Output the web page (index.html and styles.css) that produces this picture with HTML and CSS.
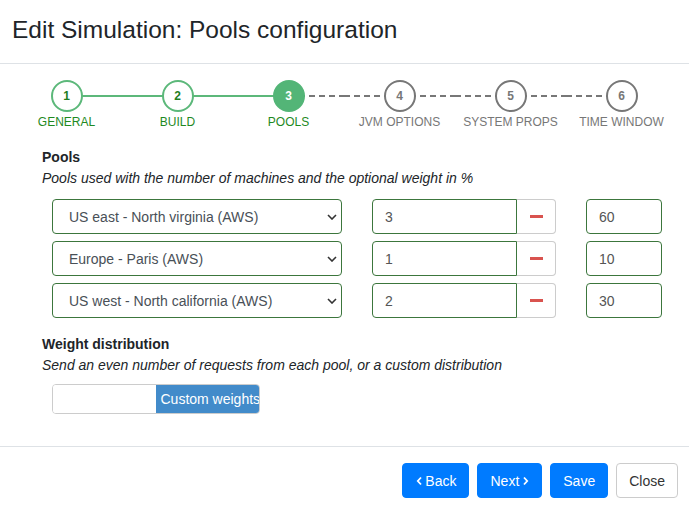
FILE: index.html
```html
<!DOCTYPE html>
<html>
<head>
<meta charset="utf-8">
<link rel="stylesheet" href="styles.css">
</head>
<body>
<div class="modal">
  <div class="modal-header">
    <h4 class="modal-title">Edit Simulation: Pools configuration</h4>
  </div>
  <div class="modal-body">
    <ol class="stepper">
      <li class="step done line-right"><span class="circle">1</span><span class="label">GENERAL</span></li>
      <li class="step done line-left line-right"><span class="circle">2</span><span class="label">BUILD</span></li>
      <li class="step active line-left dash-right"><span class="circle">3</span><span class="label">POOLS</span></li>
      <li class="step todo dash-left dash-right"><span class="circle">4</span><span class="label">JVM OPTIONS</span></li>
      <li class="step todo dash-left dash-right"><span class="circle">5</span><span class="label">SYSTEM PROPS</span></li>
      <li class="step todo dash-left"><span class="circle">6</span><span class="label">TIME WINDOW</span></li>
    </ol>

    <section class="section">
      <h5 class="section-title">Pools</h5>
      <p class="section-help">Pools used with the number of machines and the optional weight in %</p>
      <div class="pool-rows">
        <div class="pool-row">
          <div class="select-wrap"><select class="control select"><option>US east - North virginia (AWS)</option></select><svg class="chev" viewBox="0 0 10 6" width="10" height="6"><path d="M1 1l4 4 4-4" fill="none" stroke="#333" stroke-width="1.6"/></svg></div>
          <div class="input-group"><input class="control count" value="3"><button class="remove"><span class="minus"></span></button></div>
          <input class="control weight" value="60">
        </div>
        <div class="pool-row">
          <div class="select-wrap"><select class="control select"><option>Europe - Paris (AWS)</option></select><svg class="chev" viewBox="0 0 10 6" width="10" height="6"><path d="M1 1l4 4 4-4" fill="none" stroke="#333" stroke-width="1.6"/></svg></div>
          <div class="input-group"><input class="control count" value="1"><button class="remove"><span class="minus"></span></button></div>
          <input class="control weight" value="10">
        </div>
        <div class="pool-row">
          <div class="select-wrap"><select class="control select"><option>US west - North california (AWS)</option></select><svg class="chev" viewBox="0 0 10 6" width="10" height="6"><path d="M1 1l4 4 4-4" fill="none" stroke="#333" stroke-width="1.6"/></svg></div>
          <div class="input-group"><input class="control count" value="2"><button class="remove"><span class="minus"></span></button></div>
          <input class="control weight" value="30">
        </div>
      </div>
    </section>

    <section class="section weights">
      <h5 class="section-title">Weight distribution</h5>
      <p class="section-help">Send an even number of requests from each pool, or a custom distribution</p>
      <div class="toggle">
        <span class="toggle-off"></span>
        <span class="toggle-on">Custom weights</span>
      </div>
    </section>
  </div>
  <div class="modal-footer">
    <button class="btn btn-primary btn-back"><svg class="caret" viewBox="0 0 6 10" width="6" height="10"><path d="M5 1.5L1.8 5 5 8.5" fill="none" stroke="#fff" stroke-width="1.8"/></svg>Back</button>
    <button class="btn btn-primary">Next<svg class="caret caret-r" viewBox="0 0 6 10" width="6" height="10"><path d="M1 1.5L4.2 5 1 8.5" fill="none" stroke="#fff" stroke-width="1.8"/></svg></button>
    <button class="btn btn-primary">Save</button>
    <button class="btn btn-default">Close</button>
  </div>
</div>
</body>
</html>
```
FILE: styles.css
```css
* { box-sizing: border-box; }
html, body { margin: 0; padding: 0; background: #fff; }
body {
  font-family: "Liberation Sans", Arial, sans-serif;
  font-size: 14px;
  color: #212529;
  width: 689px;
  height: 510px;
  overflow: hidden;
}
.modal { width: 689px; }
.modal-header {
  padding: 15px 12px 19px;
  border-bottom: 1px solid #dee2e6;
}
.modal-title {
  margin: 0;
  font-size: 24.5px;
  font-weight: 400;
  line-height: 29px;
  color: #212529;
}
.modal-body { padding: 16px 0 32px; }

/* stepper */
.stepper {
  list-style: none;
  margin: 0 0 0 11px;
  padding: 0;
  display: grid;
  grid-template-columns: repeat(6, 111px);
}
.step {
  position: relative;
  display: flex;
  flex-direction: column;
  align-items: center;
}
.step::before, .step::after {
  content: "";
  position: absolute;
  top: 15px;
  height: 2px;
  width: 50%;
  display: none;
}
.step::before { left: 0; }
.step::after { right: 0; }
.line-left::before, .line-right::after { display: block; background: #5cb87a; }
.dash-left::before, .dash-right::after {
  display: block;
  background: repeating-linear-gradient(90deg, #777 0 6px, transparent 6px 10px);
}
.circle {
  position: relative;
  z-index: 1;
  width: 32px;
  height: 32px;
  border-radius: 50%;
  border: 2px solid #5cb87a;
  background: #fff;
  display: flex;
  align-items: center;
  justify-content: center;
  font-size: 12px;
  font-weight: 700;
  color: #1e7e1e;
}
.label {
  margin-top: 3px;
  font-size: 12px;
  line-height: 14px;
  color: #1f8a1f;
}
.active .circle { background: #53b577; border-color: #53b577; color: #fff; }
.todo .circle { border-color: #777; color: #777; }
.todo .label { color: #777; }

/* sections */
.section { padding-left: 42px; margin-top: 18px; }
.section-title {
  margin: 0;
  font-size: 14px;
  font-weight: 700;
  line-height: 20px;
  color: #212529;
}
.section-help {
  margin: 1px 0 0;
  font-style: italic;
  line-height: 20px;
  color: #212529;
}
.pool-rows {
  display: flex;
  flex-direction: column;
  gap: 7px;
  margin: 11px 0 0 10px;
}
.pool-row {
  display: flex;
  gap: 30px;
  height: 35px;
}
.control {
  font-family: inherit;
  font-size: 14px;
  color: #555;
  height: 35px;
  border: 1px solid #3c763d;
  border-radius: 4px;
  background: #fff;
  padding: 0 12px;
  outline: none;
}
.select-wrap { position: relative; width: 290px; }
.select {
  width: 100%;
  appearance: none;
  -webkit-appearance: none;
  padding-left: 16px;
  color: #495057;
}
.chev { position: absolute; right: 5px; top: 15px; pointer-events: none; }
.input-group { display: flex; width: 184px; }
.count { width: 145px; border-radius: 4px 0 0 4px; }
.remove {
  width: 39px;
  height: 35px;
  border: 1px solid #ccc;
  border-left: none;
  border-radius: 0 4px 4px 0;
  background: #fff;
  display: flex;
  align-items: center;
  justify-content: center;
  padding: 0;
}
.minus { width: 13px; height: 3px; background: #d9534f; display: block; }
.weight { width: 76px; }

.weights { margin-top: 16px; }
.toggle {
  display: flex;
  width: 208px;
  height: 30px;
  margin: 9px 0 0 10px;
  border: 1px solid #ccc;
  border-radius: 4px;
  overflow: hidden;
}
.toggle-off { width: 104px; background: #fff; }
.toggle-on {
  width: 103px;
  background: #428bca;
  color: #fff;
  line-height: 28px;
  padding-left: 4px;
  white-space: nowrap;
  overflow: hidden;
}

/* footer */
.modal-footer {
  border-top: 1px solid #dee2e6;
  padding: 16px 11px 0 0;
  display: flex;
  justify-content: flex-end;
  gap: 8px;
}
.btn {
  font-family: inherit;
  font-size: 14px;
  line-height: 20px;
  height: 35px;
  padding: 0 12px;
  border-radius: 4px;
  border: 1px solid transparent;
  display: inline-flex;
  align-items: center;
  cursor: pointer;
}
.btn-back { padding-left: 13px; }
.btn-primary { background: #007bff; border-color: #007bff; color: #fff; }
.btn-default { background: #fff; border-color: #ccc; color: #333; }
.caret { margin-right: 3px; }
.caret-r { margin: 0 0 0 4px; }
```
